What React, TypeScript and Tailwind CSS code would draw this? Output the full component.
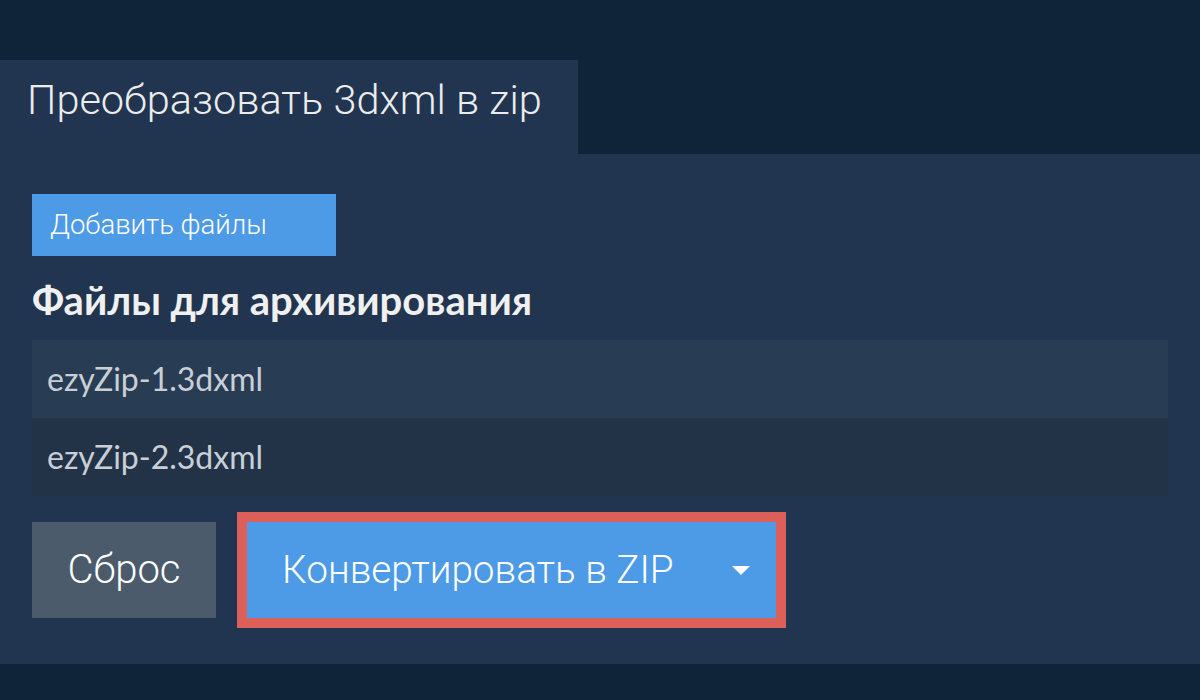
const files = ['ezyZip-1.3dxml', 'ezyZip-2.3dxml']

export default function App() {
  return (
    <div className="min-h-[700px] w-full bg-[#0f2339] pt-[60px] font-['Roboto',sans-serif]">
      <div className="flex">
        <div className="h-[94px] w-[578px] bg-[#213550] pl-[27px] pt-[14px]">
          <h1 className="text-[41.5px] font-light leading-[52px] text-[#ececec]">Преобразовать 3dxml в zip</h1>
        </div>
      </div>

      <div className="bg-[#213550] px-[32px] pt-[40px] pb-[36px]">
        <button className="h-[62px] w-[304px] bg-[#4d9ae6] pl-[18px] text-left text-[27.5px] font-light text-white">
          Добавить файлы
        </button>

        <h2 className="mt-[25px] font-['Lato',sans-serif] text-[40px] font-bold leading-[38px] text-[#f0f0f0]">
          Файлы для архивирования
        </h2>

        <ul className="mt-[21px] w-[1136px]">
          {files.map((name, i) => (
            <li
              key={name}
              className={`flex h-[78px] items-center pl-[15px] font-['Lato',sans-serif] text-[32px] text-[#c9cfd6] ${
                i === 0 ? 'bg-[#283d54]' : 'bg-[#223348]'
              }`}
            >
              {name}
            </li>
          ))}
        </ul>

        <div className="mt-[16px] flex items-center">
          <button className="h-[96px] w-[184px] bg-[#4b5b6b] text-[40px] font-light text-white">Сброс</button>
          <div className="ml-[21px] border-[10px] border-[#dc5f5a]">
            <button className="flex h-[96px] w-[529px] items-center bg-[#4d9ae6] pl-[35px] text-[38.7px] font-light text-white">
              <span>Конвертировать в ZIP</span>
              <svg className="ml-auto mr-[26px]" width="18" height="9" viewBox="0 0 18 9">
                <polygon points="0,0 18,0 9,9" fill="#ffffff" />
              </svg>
            </button>
          </div>
        </div>
      </div>
    </div>
  )
}
